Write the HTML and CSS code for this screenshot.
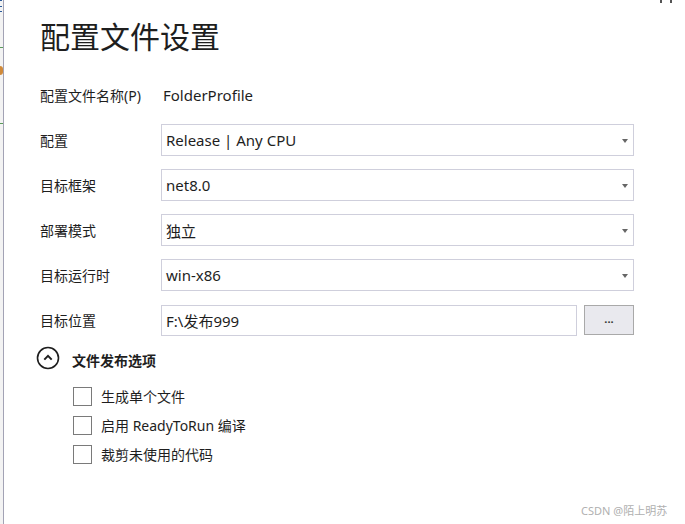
FILE: index.html
```html
<!DOCTYPE html>
<html lang="zh-CN">
  <head>
    <meta charset="UTF-8" />
    <meta name="viewport" content="width=device-width, initial-scale=1" />
    <title>配置文件设置</title>
    <link rel="stylesheet" href="styles.css">
  </head>
  <body>
    <div class="edge">
      <span class="edge-f"></span>
      <span class="edge-line one"></span>
      <span class="edge-dot"></span>
      <span class="edge-line two"></span>
    </div>
    <div class="close-mark"></div>

    <div class="page">
      <h1>配置文件设置</h1>

      <div class="form">
        <label>配置文件名称(P)</label>
        <div class="value">FolderProfile</div>

        <label>配置</label>
        <div class="select">Release | Any CPU<span class="arrow"></span></div>

        <label>目标框架</label>
        <div class="select">net8.0<span class="arrow"></span></div>

        <label>部署模式</label>
        <div class="select">独立<span class="arrow"></span></div>

        <label>目标运行时</label>
        <div class="select">win-x86<span class="arrow"></span></div>

        <label>目标位置</label>
        <div class="path-row">
          <div class="input">F:\发布999</div>
          <button>...</button>
        </div>
      </div>

      <div class="section">
        <span class="toggle">
          <svg width="24" height="24" viewBox="0 0 24 24">
            <circle cx="12" cy="12" r="10.5" fill="none" stroke="#1e1e1e" stroke-width="1.6" />
            <path d="M8.3 13.6 L12 9.9 L15.7 13.6" fill="none" stroke="#1e1e1e" stroke-width="2" />
          </svg>
        </span>
        <span class="section-title">文件发布选项</span>
      </div>

      <div class="options">
        <div class="option"><span class="box"></span>生成单个文件</div>
        <div class="option"><span class="box"></span>启用 ReadyToRun 编译</div>
        <div class="option"><span class="box"></span>裁剪未使用的代码</div>
      </div>
    </div>

    <div class="watermark">CSDN @陌上明苏</div>
  </body>
</html>
```

FILE: styles.css
```css
body {
  font-family: "Noto Sans", "Noto Sans CJK SC", sans-serif;
  margin: 0;
  padding: 0;
  background: #ffffff;
  color: #1e1e1e;
  display: flex;
  min-height: 524px;
  overflow: hidden;
}

.edge {
  position: relative;
  width: 3px;
  flex: none;
  background: #f3f3f3;
  border-right: 1px solid #a3a3b5;
}

/* cut-off bits of the window behind */
.edge-f {
  position: absolute;
  top: 0;
  left: 0;
  width: 2px;
  height: 12px;
  border-top: 1px solid #2a5a9a;
  border-bottom: 1px solid #2a5a9a;
  box-sizing: border-box;
  background: linear-gradient(#2a5a9a, #2a5a9a) 0 5px / 2px 1px no-repeat;
}

.edge-line {
  position: absolute;
  left: 0;
  width: 3px;
  height: 1px;
  background: #5a9a5a;
}

.edge-line.one {
  top: 47px;
}

.edge-line.two {
  top: 123px;
}

.edge-dot {
  position: absolute;
  top: 66px;
  left: 0;
  width: 3px;
  height: 9px;
  background: #d08a3a;
  border-radius: 0 3px 3px 0;
}

.close-mark {
  position: absolute;
  top: 0;
  left: 660px;
  width: 12px;
  height: 3px;
  border-left: 2px solid #555;
  border-right: 2px solid #555;
  box-sizing: border-box;
}

.page {
  padding: 17px 0 0 36px;
  width: 598px;
}

h1 {
  margin: 0 0 22px;
  font-size: 30px;
  line-height: 40px;
  font-weight: normal;
  color: #1e1e1e;
}

.form {
  display: grid;
  grid-template-columns: 121px 473px;
  grid-auto-rows: 32px;
  row-gap: 13px;
  align-items: center;
  font-size: 14px;
}

.form label {
  white-space: nowrap;
}

.value {
  padding-left: 2px;
  font-size: 15px;
}

.select,
.input {
  position: relative;
  height: 32px;
  box-sizing: border-box;
  border: 1px solid #cfcfdc;
  padding: 0 4px;
  display: flex;
  align-items: center;
  font-size: 15px;
  background: #fff;
}

.arrow {
  position: absolute;
  right: 5px;
  top: 14px;
  border-left: 3.5px solid transparent;
  border-right: 3.5px solid transparent;
  border-top: 4px solid #666;
}

.path-row {
  display: flex;
  gap: 7px;
  align-items: center;
}

.input {
  width: 416px;
  height: 31px;
}

button {
  width: 50px;
  height: 30px;
  background: #e9e9ee;
  border: 1px solid #a9a9a9;
  font-size: 11px;
  font-weight: bold;
  color: #333;
  padding: 0 0 4px;
  font-family: inherit;
}

.section {
  display: flex;
  align-items: center;
  gap: 12px;
  margin: 12px 0 0 -4px;
  height: 24px;
}

.section-title {
  font-size: 14px;
  font-weight: bold;
}

.options {
  display: flex;
  flex-direction: column;
  gap: 9px;
  margin-top: 14px;
  padding-left: 33px;
}

.option {
  display: flex;
  align-items: center;
  gap: 9px;
  height: 20px;
  font-size: 14px;
}

.box {
  width: 19px;
  height: 19px;
  box-sizing: border-box;
  border: 1px solid #7a7a7a;
  background: #fff;
}

.watermark {
  position: absolute;
  left: 581px;
  top: 502px;
  font-size: 11px;
  color: #b0b0b0;
  white-space: nowrap;
}
```
